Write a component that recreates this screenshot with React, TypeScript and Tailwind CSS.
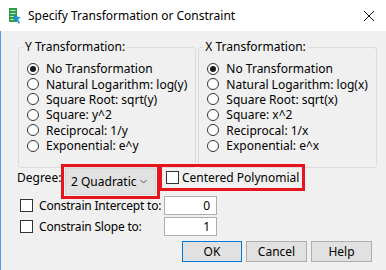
import React, { useState } from "react";

const yOptions = [
  "No Transformation",
  "Natural Logarithm: log(y)",
  "Square Root: sqrt(y)",
  "Square: y^2",
  "Reciprocal: 1/y",
  "Exponential: e^y",
];

const xOptions = [
  "No Transformation",
  "Natural Logarithm: log(x)",
  "Square Root: sqrt(x)",
  "Square: x^2",
  "Reciprocal: 1/x",
  "Exponential: e^x",
];

// Classic Windows radio button
const Radio = ({ checked }: { checked: boolean }) => (
  <span className="w-[12px] h-[12px] rounded-full border border-[#333333] bg-white flex items-center justify-center shrink-0">
    {checked && <span className="w-[6px] h-[6px] rounded-full bg-[#1a1a1a]" />}
  </span>
);

const CheckBox = () => (
  <span className="block w-[13px] h-[13px] border border-[#333333] bg-white shrink-0" />
);

interface GroupProps {
  title: string;
  options: string[];
  className?: string;
}

const TransformGroup: React.FC<GroupProps> = ({ title, options, className }) => {
  const [selected, setSelected] = useState(0);
  return (
    <fieldset
      className={`border border-[#dcdcdc] rounded-[3px] pl-[8px] pr-2 pt-[6px] pb-[14px] ${className ?? ""}`}
    >
      <legend className="-ml-[4px] px-[2px] leading-[16px]">{title}</legend>
      <div className="flex flex-col">
        {options.map((opt, i) => (
          <label
            key={opt}
            className="h-[15.4px] flex items-center gap-[7px] cursor-default"
            onClick={() => setSelected(i)}
          >
            <Radio checked={selected === i} />
            <span className="leading-[15px] whitespace-nowrap">{opt}</span>
          </label>
        ))}
      </div>
    </fieldset>
  );
};

export default function App() {
  return (
    <div
      className="w-[386px] h-[270px] bg-[#f0f0f0] flex flex-col overflow-hidden text-[12px] text-black"
      style={{ fontFamily: '"Noto Sans", "Open Sans", sans-serif' }}
    >
      {/* Title bar */}
      <div className="h-[31px] bg-white flex items-center shrink-0">
        <svg width="14" height="16" viewBox="0 0 14 16" className="ml-[8px] mt-[1px]">
          <rect x="1" y="0" width="8" height="14" fill="#2e9b48" />
          <rect x="2.5" y="2" width="5" height="1" fill="#c9efd3" />
          <rect x="2.5" y="5" width="5" height="1" fill="#c9efd3" />
          <rect x="2.5" y="8" width="3" height="1" fill="#c9efd3" />
          <rect x="2.5" y="11" width="3" height="1" fill="#c9efd3" />
          <path d="M6 7 L13 10 L10 11 L12 15 L10.5 15.5 L8.5 11.8 L6.5 13.5 Z" fill="#1d8fe0" />
        </svg>
        <span className="ml-[6px] text-[12px] leading-[16px]">
          Specify Transformation or Constraint
        </span>
        <svg width="12" height="12" viewBox="0 0 12 12" className="ml-auto mr-[11px]">
          <path d="M1 1 L11 11 M11 1 L1 11" stroke="#111" strokeWidth="1" />
        </svg>
      </div>

      {/* Body */}
      <div className="flex-1 border-l border-[#4d9de6] pl-[17px] pt-[8px] flex flex-col">
        <div className="flex gap-[2px] w-[355px]">
          <TransformGroup title="Y Transformation:" options={yOptions} className="w-[176px]" />
          <TransformGroup title="X Transformation:" options={xOptions} className="w-[177px]" />
        </div>

        {/* Degree row */}
        <div className="flex items-start mt-[-4px]">
          <span className="w-[44px] -ml-[1px] mt-[6px] leading-[16px]">Degree:</span>
          <div className="w-[99px] h-[35px] border-[3px] border-[#e5141d] p-[1px] flex">
            <div className="flex-1 bg-[#e1e1e1] border border-[#d4d4d4] flex items-center pl-[5px] pr-[8px]">
              <span className="leading-[16px] whitespace-nowrap">2 Quadratic</span>
              <svg width="7" height="5" viewBox="0 0 7 5" className="ml-auto">
                <path d="M0.5 1 L3.5 4 L6.5 1" stroke="#555" fill="none" strokeWidth="1" />
              </svg>
            </div>
          </div>
          <div className="w-[146px] h-[27px] border-[3px] border-[#e5141d] flex items-center pl-[4px] -ml-[1px]">
            <CheckBox />
            <span className="ml-[3px] leading-[16px] whitespace-nowrap">Centered Polynomial</span>
          </div>
        </div>

        {/* Constraint rows */}
        <div className="flex flex-col gap-[2px] mt-[-3px]">
          <div className="flex items-center h-[19px]">
            <span className="ml-[2px]"><CheckBox /></span>
            <span className="ml-[6px] w-[125px] leading-[16px] whitespace-nowrap tracking-[-0.2px]">
              Constrain Intercept to:
            </span>
            <div className="w-[53px] h-[19px] bg-white border border-[#adadad] text-right pr-[6px] leading-[17px]">
              0
            </div>
          </div>
          <div className="flex items-center h-[19px]">
            <span className="ml-[2px]"><CheckBox /></span>
            <span className="ml-[6px] w-[125px] leading-[16px] whitespace-nowrap tracking-[-0.2px]">
              Constrain Slope to:
            </span>
            <div className="w-[53px] h-[19px] bg-white border border-[#adadad] text-right pr-[6px] leading-[17px]">
              1
            </div>
          </div>
        </div>

        {/* Buttons */}
        <div className="flex justify-end gap-[4px] w-[354px] mt-[5px]">
          <button className="w-[60px] h-[21px] bg-[#e1e1e1] border border-[#0078d7] leading-[17px]">OK</button>
          <button className="w-[61px] h-[21px] bg-[#e1e1e1] border border-[#adadad] leading-[17px]">Cancel</button>
          <button className="w-[61px] h-[21px] bg-[#e1e1e1] border border-[#adadad] leading-[17px]">Help</button>
        </div>
      </div>
    </div>
  );
}
